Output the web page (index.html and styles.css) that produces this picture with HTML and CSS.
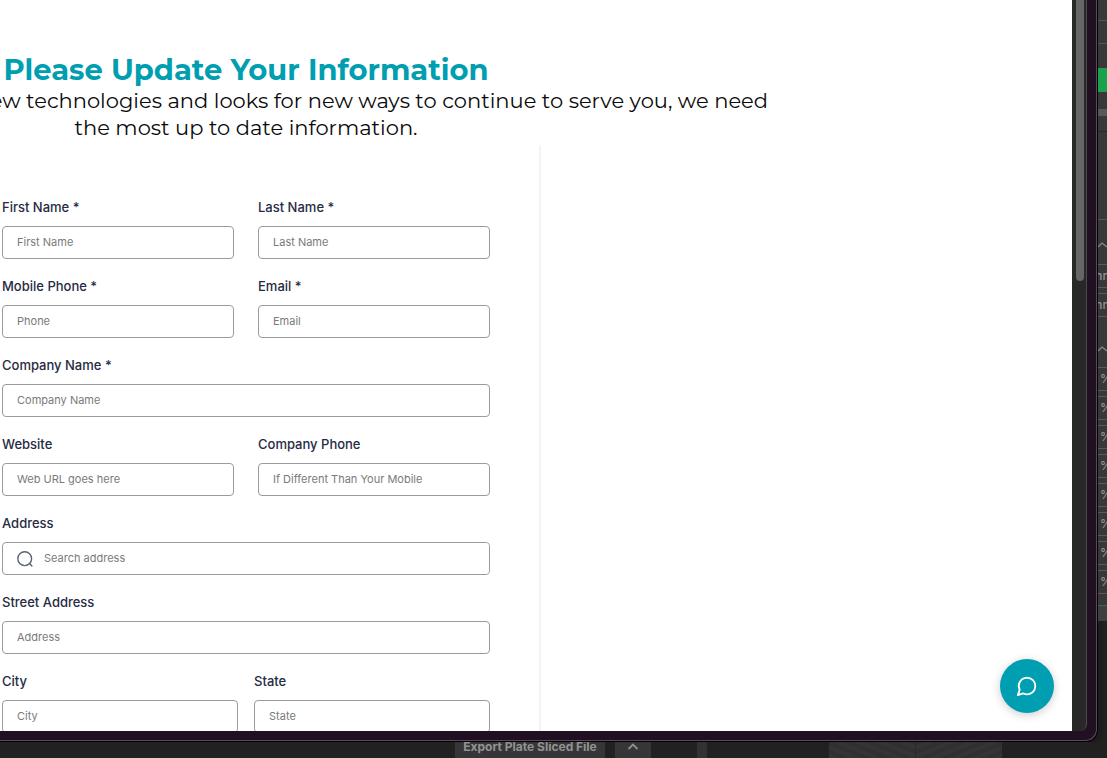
FILE: index.html
```html
<!DOCTYPE html>
<html lang="en">
<head>
<meta charset="utf-8">
<title>Please Update Your Information</title>
<link rel="stylesheet" href="styles.css">
</head>
<body>
<div class="desktop">
  <div class="window">
    <div class="viewport">
      <main class="page">
        <header class="intro">
          <h1>Please Update Your Information</h1>
          <p class="line line-first">ew technologies and looks for new ways to continue to serve you, we need</p>
          <p class="line line-last">the most up to date information.</p>
        </header>
        <section class="panel">
          <form class="form">
            <div class="row">
              <div class="field"><label for="first">First Name *</label><input id="first" type="text" placeholder="First Name"></div>
              <div class="field"><label for="last">Last Name *</label><input id="last" type="text" placeholder="Last Name"></div>
            </div>
            <div class="row">
              <div class="field"><label for="mobile">Mobile Phone *</label><input id="mobile" type="tel" placeholder="Phone"></div>
              <div class="field"><label for="email">Email *</label><input id="email" type="email" placeholder="Email"></div>
            </div>
            <div class="row">
              <div class="field"><label for="company">Company Name *</label><input id="company" type="text" placeholder="Company Name"></div>
            </div>
            <div class="row">
              <div class="field"><label for="website">Website</label><input id="website" type="url" placeholder="Web URL goes here"></div>
              <div class="field"><label for="cphone">Company Phone</label><input id="cphone" type="tel" placeholder="If Different Than Your Mobile"></div>
            </div>
            <div class="row">
              <div class="field"><label for="search">Address</label>
                <div class="search">
                  <svg width="18" height="18" viewBox="0 0 18 18" fill="none" stroke="#5b6478" stroke-width="1.4" stroke-linecap="round"><circle cx="8.7" cy="8.7" r="6.9"/><path d="M13.6 13.6l2.300 2.400"/></svg>
                  <input id="search" type="text" placeholder="Search address">
                </div>
              </div>
            </div>
            <div class="row">
              <div class="field"><label for="street">Street Address</label><input id="street" type="text" placeholder="Address"></div>
            </div>
            <div class="row row-tight">
              <div class="field"><label for="city">City</label><input id="city" type="text" placeholder="City"></div>
              <div class="field"><label for="state">State</label><input id="state" type="text" placeholder="State"></div>
            </div>
          </form>
        </section>
        <button class="chat" type="button" aria-label="Open chat">
          <svg width="22" height="22" viewBox="0 0 24 24" fill="none" stroke="#fff" stroke-width="2" stroke-linecap="round" stroke-linejoin="round"><path d="M7.900 20A9 9 0 1 0 4 16.100L2 22Z"/></svg>
        </button>
      </main>
      <div class="scrollbar"><div class="thumb"></div></div>
    </div>
  </div>
  <aside class="side">
    <div class="rule rule-a"></div>
    <div class="rule rule-b"></div>
    <div class="green"></div>
    <div class="bar"></div>
    <div class="rule rule-dark"></div>
    <div class="rule rule-green"></div>
    <div class="fold"><svg width="12" height="6" viewBox="0 0 12 6" fill="none" stroke="#8a8a8c" stroke-width="1.3"><path d="M0 5l4-4 5 4"/></svg></div>
    <div class="cell cell-mm">mm</div>
    <div class="cell cell-mm">mm</div>
    <div class="fold fold-low"><svg width="12" height="6" viewBox="0 0 12 6" fill="none" stroke="#8a8a8c" stroke-width="1.3"><path d="M0 5l4-4 5 4"/></svg></div>
    <div class="cell">%</div>
    <div class="cell">%</div>
    <div class="cell">%</div>
    <div class="cell">%</div>
    <div class="cell">%</div>
    <div class="cell">%</div>
    <div class="cell">%</div>
    <div class="cell">%</div>
    <div class="side-end"></div>
  </aside>
  <footer class="dock">
    <button class="export" type="button">Export Plate Sliced File</button>
    <button class="more" type="button" aria-label="More export options"><svg width="12" height="8" viewBox="0 0 12 8" fill="none" stroke="#8f8f91" stroke-width="1.8"><path d="M1.500 7L6 2.500l4.500 4.500"/></svg></button>
    <div class="stripe"></div>
    <div class="plate"></div>
  </footer>
</div>
</body>
</html>
```
FILE: styles.css
```css
* { box-sizing: border-box; }

body {
  margin: 0;
  background: #242425;
  font-family: Inter, "Liberation Sans", sans-serif;
  overflow: hidden;
}

.desktop {
  display: grid;
  grid-template-columns: minmax(0, 1fr) 9px;
  grid-template-rows: minmax(0, 1fr) 16px;
  height: 100vh;
}

.window {
  padding: 0 9px 9px 0;
  border: solid #000;
  border-width: 0 1px 1px 0;
  border-bottom-right-radius: 12px;
  background: #210f22;
  box-shadow: inset -1px -1px 0 #5a4a5c, 0 4px 14px rgba(0, 0, 0, 0.5);
  min-height: 0;
}

.viewport {
  display: flex;
  height: 100%;
  padding-bottom: 1px;
  margin-right: 1px;
}

.page {
  position: relative;
  flex: 1;
  min-width: 0;
  overflow: hidden;
  background: #fff;
}

.scrollbar {
  width: 15px;
  padding: 0 2px 0 4px;
  background: #282828;
  border-right: 1px solid #4d4a4e;
  border-bottom-right-radius: 7px;
}

.thumb {
  width: 8px;
  height: 281px;
  border-radius: 0 0 4px 4px;
  background: #666;
}

.intro {
  padding-top: 52px;
  font-family: Montserrat, "Noto Sans", sans-serif;
}

.intro h1 {
  width: 492px;
  margin: 0;
  color: #009eb1;
  font-size: 29px;
  font-weight: 700;
  line-height: 35px;
  text-align: center;
  white-space: nowrap;
}

.line {
  margin: 0;
  color: #0a0a0a;
  font-size: 21px;
  line-height: 27px;
  white-space: nowrap;
}

.line-first {
  display: flex;
  justify-content: flex-end;
  width: 768px;
}

.line-last {
  width: 492px;
  text-align: center;
}

.panel {
  width: 541px;
  padding: 54px 49px 0 2px;
  border-right: 2px solid #f4f4f4;
  margin-top: 4px;
}

.form {
  display: flex;
  flex-direction: column;
  gap: 19px;
}

.row {
  display: flex;
  gap: 24px;
}

.row-tight { gap: 16px; }

.field {
  display: flex;
  flex: 1;
  flex-direction: column;
  gap: 11px;
  min-width: 0;
}

.field label {
  color: #252b42;
  font-size: 13px;
  font-weight: 500;
  line-height: 16px;
}

.field input {
  width: 100%;
  height: 33px;
  padding: 0 14px 2px;
  border: 1px solid #9b9b9b;
  border-radius: 4px;
  background: #fff;
  color: #252b42;
  font: 11px Inter, "Liberation Sans", sans-serif;
}

.field input::placeholder { color: #7a7a7a; }

.search {
  display: flex;
  align-items: center;
  gap: 10px;
  height: 33px;
  padding-left: 13px;
  border: 1px solid #9b9b9b;
  border-radius: 4px;
}

.search input {
  flex: 1;
  height: 31px;
  padding-left: 0;
  border: 0;
}

.chat {
  position: absolute;
  right: 18px;
  bottom: 18px;
  display: grid;
  place-items: center;
  width: 54px;
  height: 54px;
  padding: 0;
  border: 0;
  border-radius: 50%;
  background: #009eb1;
  box-shadow: 0 2px 10px rgba(0, 0, 0, 0.2);
}

.side {
  align-self: start;
  overflow: hidden;
  background: #383839;
}

.rule { height: 1px; background: #555557; }
.rule-a { margin-top: 20px; }
.rule-b { margin-top: 22px; }
.green { height: 24px; margin-top: 24px; background: #19a14d; }
.bar { height: 7px; margin-top: 17px; background: #58585b; }
.rule-dark { margin-top: 15px; background: #29292a; }
.rule-green { margin-top: 87px; background: #2f6b4c; }

.fold {
  height: 44px;
  padding-top: 22px;
  line-height: 0;
}

.fold-low { height: 45px; padding-top: 24px; }

.cell {
  height: 24px;
  margin-bottom: 5px;
  padding-left: 2px;
  border: solid #59595b;
  border-width: 1px 0;
  color: #929295;
  font-size: 12px;
  font-weight: 500;
  line-height: 22px;
}

.cell-mm {
  display: flex;
  justify-content: center;
  padding: 0;
}

.side-end {
  height: 16px;
  margin-top: 11px;
  border-top: 1px solid #2f6b4c;
  background: #3f3f40;
}

.dock {
  grid-column: 1 / -1;
  display: flex;
  height: 16px;
  padding-left: 455px;
  overflow: hidden;
  background: #212122;
}

.dock button {
  height: 16px;
  padding: 0;
  border: 0;
  background: #363638;
  color: #929292;
  font: 700 12px/10px Inter, "Liberation Sans", sans-serif;
}

.dock .export {
  width: 150px;
  padding-bottom: 6px;
  white-space: nowrap;
}

.dock .more {
  display: grid;
  place-items: start center;
  width: 36px;
  margin-left: 10px;
}

.stripe { width: 10px; margin-left: 46px; background: #323233; }

.plate {
  width: 173px;
  margin-left: 122px;
  background:
    repeating-linear-gradient(22deg, #343435 0 4px, #303031 4px 8px) left / 50% 100% no-repeat,
    repeating-linear-gradient(-22deg, #343435 0 4px, #303031 4px 8px) right / 50% 100% no-repeat;
}
```
